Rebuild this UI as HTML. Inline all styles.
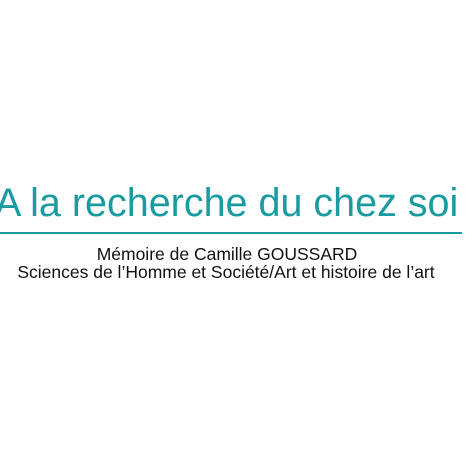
<!DOCTYPE html>
<html><head><meta charset="utf-8"><style>
html,body{margin:0;padding:0;width:476px;height:476px;background:#fff;overflow:hidden;position:relative;font-family:"Liberation Sans",Arial,sans-serif}
.t{position:absolute;left:-5px;top:180px;font-size:39.5px;color:#1a9aa1;white-space:nowrap;line-height:46px}
.l{position:absolute;left:0;top:232px;width:462px;height:2px;background:#1a9aa1}
.s{position:absolute;left:0;width:476px;text-align:center;font-size:17.5px;color:#111;white-space:nowrap;line-height:18px}
</style></head><body>
<div class="t">A la recherche du chez soi</div>
<div class="l"></div>
<div class="s" style="top:245px;left:-11px">Mémoire de Camille GOUSSARD</div>
<div class="s" style="top:263px;left:-12px">Sciences de l’Homme et Société/Art et histoire de l’art</div>
</body></html>
